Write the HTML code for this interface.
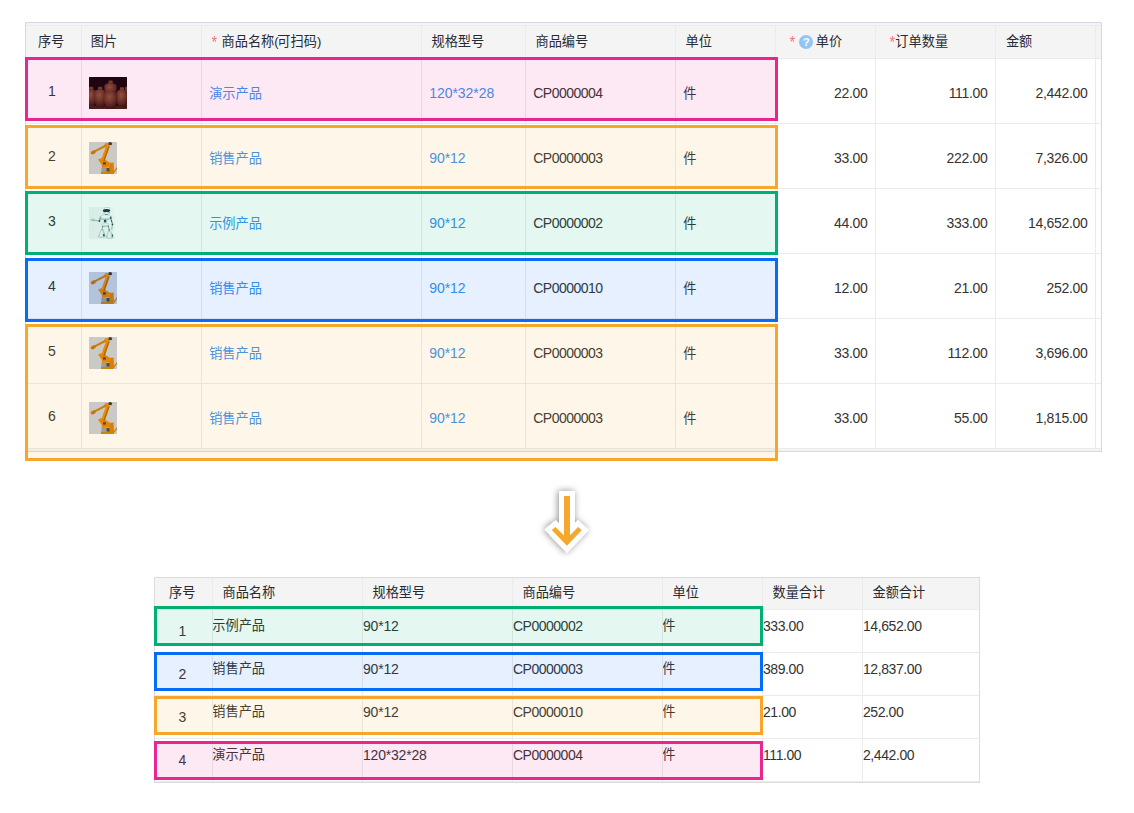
<!DOCTYPE html>
<html lang="zh-CN">
<head>
<meta charset="utf-8">
<title>明细汇总</title>
<style>
*{box-sizing:border-box}
html,body{margin:0;padding:0;background:#fff}
body{position:relative;width:1134px;height:813px;overflow:hidden;font-family:"Liberation Sans",sans-serif;font-size:14px;line-height:16px;color:#333}
.cj{display:inline-block;vertical-align:middle;font-family:"Liberation Sans","Noto Sans CJK SC",sans-serif;font-size:13.2px;line-height:13.2px;height:13.2px;letter-spacing:0;white-space:nowrap;overflow:visible;position:relative}
.grid{position:absolute;border:1px solid #d8d8d8;background:#fff;overflow:hidden}
.grid table{border-collapse:separate;border-spacing:0;table-layout:fixed;width:100%}
.grid th,.grid td{padding:0;border-right:1px solid #ebebeb;border-bottom:1px solid #ebebeb;font-weight:normal;text-align:left;white-space:nowrap;overflow:hidden;vertical-align:middle}
.grid th{background:#f4f4f4;color:#262a33}
.grid th:last-child,.grid td:last-child{border-right:0}
.h{display:flex;align-items:center;height:32px}
#t2 .h{height:31px}
.star{color:#f67272;font-size:17px;line-height:16px;height:16px;position:relative;top:1.2px;margin-left:-.9px;margin-right:-1px;transform:scaleX(.84)}
.par{font-size:13px;line-height:16px;letter-spacing:-1.3px;top:-.2px}
.lat{position:relative}

/* ---------- top table */
#t1{left:25px;top:22px;width:1077px;height:430px}
#t1 .cap{height:2px;background:#f1f4fa}
#t1 .foot{height:2px;background:#f4f4f4}
#t1 th{height:34px;border-top:1px solid #ebebeb;padding-left:9.5px}
#t1 th .cj{top:-.3px}
#t1 td{height:65px;padding-left:7.2px}
#t1 td .cj{top:.8px}
#t1 td.idx{text-align:center;padding:0 3px 0 0}
#t1 td.img{padding-left:7px;line-height:0}
#t1 td.img svg{display:block;position:relative;top:2px}
#t1 td.num{text-align:right;padding:0 7.6px 0 0;letter-spacing:-.33px}
#t1 td.code{letter-spacing:-.5px}
#t1 td.spec{letter-spacing:-.05px}
#t1 .lnk{color:#3791f0}
#t1 td .lat{top:1.5px}
#t1 td.idx .lat{top:-.4px}
.q{display:block;flex:none;width:14px;height:14px;border-radius:50%;background:#93c4f4;color:#fff;font-weight:bold;font-size:11.5px;line-height:15.4px;text-align:center;position:relative;margin:0 2.5px 0 4.4px;top:0px}

/* ---------- bottom table */
#t2{left:154px;top:577px;width:826px;height:206px;border-color:#dcdcdc}
#t2 th{height:32px;padding-left:9.5px}
#t2 th .cj{top:-1px}
#t2 td{height:43px;vertical-align:top;padding-top:8px;letter-spacing:-.42px}
#t2 td.idx{text-align:center;vertical-align:middle;padding:0 2px 0 0;letter-spacing:0}
#t2 td.code{letter-spacing:-.5px}
#t2 td.spec{letter-spacing:-.2px}
#t2 td .cj{top:-1.6px;margin-left:-.7px}

/* ---------- highlight overlays */
.hl{position:absolute;border:3px solid;pointer-events:none}
.hl.pink{border-color:#e9268f;background:rgba(233,38,143,.1)}
.hl.orange{border-color:#f5a62b;background:rgba(245,166,43,.1)}
.hl.green{border-color:#00b073;background:rgba(0,176,115,.1)}
.hl.blue{border-color:#066cf6;background:rgba(6,108,246,.1)}
#arrow{position:absolute;left:527px;top:476px}
</style>
</head>
<body>

<svg width="0" height="0" style="position:absolute" aria-hidden="true"><defs>
<radialGradient id="jg" cx=".42" cy=".32" r=".8"><stop offset="0" stop-color="#8a5532"/><stop offset=".5" stop-color="#5a301d"/><stop offset="1" stop-color="#1c0905"/></radialGradient>
<filter id="b4" x="-10%" y="-10%" width="120%" height="120%"><feGaussianBlur stdDeviation=".45"/></filter>
<filter id="b3" x="-10%" y="-10%" width="120%" height="120%"><feGaussianBlur stdDeviation=".3"/></filter>
<filter id="sh" x="-60%" y="-40%" width="220%" height="180%"><feDropShadow dx="-1" dy="0" stdDeviation="3.5" flood-color="#000" flood-opacity=".45"/></filter>
<symbol id="arm" viewBox="0 0 28 32">
 <rect width="28" height="32" fill="#c6cdd8"/>
 <g filter="url(#b3)">
  <path d="M12 30.1 L24 30.1 L28 25 L28 26.9 L24.4 31.9 L12 31.9Z" fill="#c28408"/>
  <rect x="12.4" y="25.6" width="5" height="4.4" fill="#9b99a0"/>
  <rect x="17.4" y="26" width="3.6" height="3.7" fill="#4b4233"/>
  <path d="M19.5 21 L24.6 20.6 L25 30 L20.8 30 Z" fill="#d87a04"/>
  <path d="M9 17.5 L13.5 15.8 L21.5 21.2 L21 25.6 L13 25.8 L12.6 22.6 Z" fill="#e28204"/>
  <rect x="14" y="20.2" width="2.8" height="2.4" fill="#3d3a36"/>
  <path d="M17.3 3.2 L20.7 4.6 L15.5 19.3 L12.2 17.7 Z" fill="#e98a06"/>
  <path d="M19.4 4.1 L20.7 4.6 L15.5 19.3 L14.2 18.7Z" fill="#a86004"/>
  <circle cx="17.6" cy="3.3" r="2.3" fill="#e08a08"/>
  <ellipse cx="21.2" cy="1.7" rx="1.9" ry="1.6" fill="#3a2b2a"/>
  <path d="M16.2 2.8 L17 4.7 L5.2 10.8 L4.4 9 Z" fill="#c47a08"/>
  <ellipse cx="4.2" cy="10.4" rx="2.6" ry="1.8" transform="rotate(-22 4.2 10.4)" fill="#c96c06"/>
 </g>
</symbol>
</defs></svg>
<div class="grid" id="t1"><div class="cap"></div><table>
<colgroup><col style="width:56px"><col style="width:120px"><col style="width:220px"><col style="width:104px"><col style="width:150px"><col style="width:100px"><col style="width:100px"><col style="width:120px"><col style="width:100px"><col style="width:5px"></colgroup>
<thead><tr>
<th style="padding-left:11.9px"><div class="h"><span class="cj">序号</span></div></th>
<th style="padding-left:8.8px"><div class="h"><span class="cj">图片</span></div></th>
<th style="padding-left:10px"><div class="h"><span class="star">*</span><span style="display:inline-block;width:4.8px"></span><span class="cj">商品名称</span><span class="lat par">(</span><span class="cj">可扫码</span><span class="lat par">)</span></div></th>
<th><div class="h"><span class="cj">规格型号</span></div></th>
<th><div class="h"><span class="cj">商品编号</span></div></th>
<th><div class="h"><span class="cj">单位</span></div></th>
<th style="padding-left:14.1px"><div class="h"><span class="star">*</span><span class="q">?</span><span class="cj">单价</span></div></th>
<th style="padding-left:14.1px"><div class="h"><span class="star">*</span><span style="display:inline-block;width:.5px"></span><span class="cj">订单数量</span></div></th>
<th style="padding-left:9.9px"><div class="h"><span class="cj">金额</span></div></th>
<th></th></tr></thead><tbody>
<tr><td class="idx"><span class="lat">1</span></td><td class="img"><svg width="38" height="32" viewBox="0 0 38 32" role="img" aria-label="jars"><rect width="38" height="32" fill="#070203"/><g filter="url(#b4)"><rect y="28.8" width="38" height="3.2" fill="#3a1a0c"/><rect x="19.4" y="3.6" width="4.4" height="3" rx="1.1" fill="#6b3d25"/><path d="M20.0,6.2 C15.7,6.6 15.4,8.2 15.4,10.8 C15.4,14.6 17.1,17.7 17.8,19.0 L25.4,19.0 C26.1,17.7 27.8,14.6 27.8,10.8 C27.8,8.2 27.5,6.6 23.2,6.2Z" fill="url(#jg)"/><rect x="0.0" y="9.8" width="4.4" height="3" rx="1.1" fill="#6b3d25"/><path d="M0.6,12.4 C-2.8,12.8 -3.1,15.1 -3.1,18.4 C-3.1,23.4 -1.6,27.3 -1.1,29.0 L5.5,29.0 C6.0,27.3 7.5,23.4 7.5,18.4 C7.5,15.1 7.2,12.8 3.8,12.4Z" fill="url(#jg)"/><rect x="36.0" y="9.8" width="4.4" height="3" rx="1.1" fill="#6b3d25"/><path d="M36.6,12.4 C34.4,12.8 34.2,15.1 34.2,18.4 C34.2,23.4 35.3,27.3 35.7,29.0 L40.7,29.0 C41.1,27.3 42.2,23.4 42.2,18.4 C42.2,15.1 42.0,12.8 39.8,12.4Z" fill="url(#jg)"/><rect x="9.0" y="9.8" width="4.4" height="3" rx="1.1" fill="#6b3d25"/><path d="M9.6,12.4 C5.5,12.8 5.2,15.2 5.2,18.7 C5.2,24.0 6.9,28.2 7.5,30.0 L14.9,30.0 C15.5,28.2 17.2,24.0 17.2,18.7 C17.2,15.2 16.9,12.8 12.8,12.4Z" fill="url(#jg)"/><rect x="30.8" y="10.2" width="4.4" height="3" rx="1.1" fill="#6b3d25"/><path d="M31.4,12.8 C27.5,13.2 27.2,15.6 27.2,19.0 C27.2,24.2 28.8,28.3 29.4,30.0 L36.6,30.0 C37.2,28.3 38.8,24.2 38.8,19.0 C38.8,15.6 38.5,13.2 34.6,12.8Z" fill="url(#jg)"/><rect x="19.4" y="11.8" width="4.4" height="3" rx="1.1" fill="#6b3d25"/><path d="M20.0,14.4 C15.1,14.8 14.8,17.1 14.8,20.4 C14.8,25.5 16.7,29.5 17.4,31.2 L25.8,31.2 C26.5,29.5 28.4,25.5 28.4,20.4 C28.4,17.1 28.1,14.8 23.2,14.4Z" fill="url(#jg)"/></g></svg></td><td class="lnk"><span class="cj">演示产品</span></td><td class="spec lnk"><span class="lat">120*32*28</span></td><td class="code"><span class="lat">CP0000004</span></td><td><span class="cj">件</span></td><td class="num"><span class="lat">22.00</span></td><td class="num"><span class="lat">111.00</span></td><td class="num"><span class="lat">2,442.00</span></td><td></td></tr>
<tr><td class="idx"><span class="lat">2</span></td><td class="img"><svg width="28" height="32" role="img" aria-label="robot arm"><use href="#arm" width="28" height="32"/></svg></td><td class="lnk"><span class="cj">销售产品</span></td><td class="spec lnk"><span class="lat">90*12</span></td><td class="code"><span class="lat">CP0000003</span></td><td><span class="cj">件</span></td><td class="num"><span class="lat">33.00</span></td><td class="num"><span class="lat">222.00</span></td><td class="num"><span class="lat">7,326.00</span></td><td></td></tr>
<tr><td class="idx"><span class="lat">3</span></td><td class="img"><svg width="26" height="32" viewBox="0 0 26 32" role="img" aria-label="robot"><defs>
<linearGradient id="rbg" x1="0" x2="1" y1="0" y2="0"><stop offset="0" stop-color="#f1f4f4"/><stop offset=".55" stop-color="#f3f5f5"/><stop offset="1" stop-color="#fbfcfc"/></linearGradient>
<linearGradient id="wg" x1="0" x2="0" y1="0" y2="1"><stop offset="0" stop-color="#ffffff"/><stop offset=".55" stop-color="#f4f8f9"/><stop offset="1" stop-color="#96aab1"/></linearGradient>
<linearGradient id="wg2" x1="0" x2="1" y1="0" y2="0"><stop offset="0" stop-color="#c3d0d4"/><stop offset=".35" stop-color="#ffffff"/><stop offset=".65" stop-color="#e4ebed"/><stop offset="1" stop-color="#8fa5ad"/></linearGradient>
</defs><rect width="26" height="32" fill="url(#rbg)"/><g filter="url(#b3)">
<ellipse cx="18" cy="1.7" rx="2.5" ry="1.5" fill="#fbfdfd" stroke="#9fb3b9" stroke-width=".5"/>
<ellipse cx="17.5" cy="3.6" rx="3.7" ry="1.7" fill="#0f2c29"/>
<path d="M14.2 4.6 Q17.4 6.4 21.2 4.4 L20.6 6.2 Q17.6 7.6 14.8 6Z" fill="#7fb0ba"/>
<ellipse cx="17.5" cy="6.4" rx="2.3" ry="1.3" fill="url(#wg)" stroke="#a9bbc0" stroke-width=".4"/>
<rect x="16" y="7.2" width="2.4" height="1" fill="#1c3f3d"/>
<path d="M11 10.2 Q11.4 7.8 16.6 7.8 Q21.8 7.8 22 10 Q22 12.6 16.6 13 Q11.4 12.8 11 10.2Z" fill="url(#wg)" stroke="#a3b6bc" stroke-width=".5"/>
<ellipse cx="21.7" cy="10.9" rx=".95" ry="1.3" fill="#2a5a58"/>
<rect x="14.9" y="12.8" width="2.5" height="2.7" rx=".9" fill="#1f4e4b"/>
<path d="M12.8 17.4 Q13 16 16.3 16 Q19.6 16 19.8 17.4 Q19.4 19.4 16.3 19.5 Q13.2 19.4 12.8 17.4Z" fill="url(#wg)" stroke="#a3b6bc" stroke-width=".5"/>
<path d="M11.7 10.2 L10.3 14" stroke="#8ea6ad" stroke-width="1.5" stroke-linecap="round"/>
<circle cx="10.3" cy="14" r="1" fill="#24524f"/>
<path d="M10 14 L6 13.3" stroke="#a3b6bb" stroke-width="1.1"/>
<path d="M.9 11.9 Q2 14.9 6.4 13.9 L6.2 12.6 L5 12.8 L4.3 10.6 L3.5 12.4Z" fill="#aebfc4"/>
<path d="M22.2 12 L23.4 17.3 L22.7 23" stroke="#9fb4ba" stroke-width="1.1" fill="none"/>
<circle cx="23.5" cy="17.4" r=".85" fill="#1d4644"/><path d="M22.3 12.8 L22.9 15.4" stroke="#2f615f" stroke-width="1"/>
<path d="M13.7 19 L13.2 23.2" stroke="#4d7a79" stroke-width="1.1"/><path d="M13.5 20.6 L13.3 22" stroke="#c8d5d8" stroke-width="1.4"/>
<path d="M19.1 18.6 L20.4 24" stroke="#4d7a79" stroke-width="1.1"/><path d="M19.6 20.6 L19.9 22" stroke="#c8d5d8" stroke-width="1.4"/>
<path d="M12.2 23 L14.2 23 L16.4 29.6 Q13 31 9.4 29.8 Z" fill="url(#wg2)" stroke="#9db0b6" stroke-width=".55"/><ellipse cx="14.8" cy="28.1" rx=".9" ry="1.2" fill="#2a5755"/>
<path d="M19.4 24 L21.4 24 L24.2 30.6 Q21 32.2 17.4 30.8 Z" fill="url(#wg2)" stroke="#9db0b6" stroke-width=".55"/><ellipse cx="23.5" cy="28.4" rx=".55" ry="1.2" fill="#2a5755"/>
</g></svg></td><td class="lnk"><span class="cj">示例产品</span></td><td class="spec lnk"><span class="lat">90*12</span></td><td class="code"><span class="lat">CP0000002</span></td><td><span class="cj">件</span></td><td class="num"><span class="lat">44.00</span></td><td class="num"><span class="lat">333.00</span></td><td class="num"><span class="lat">14,652.00</span></td><td></td></tr>
<tr><td class="idx"><span class="lat">4</span></td><td class="img"><svg width="28" height="32" role="img" aria-label="robot arm"><use href="#arm" width="28" height="32"/></svg></td><td class="lnk"><span class="cj">销售产品</span></td><td class="spec lnk"><span class="lat">90*12</span></td><td class="code"><span class="lat">CP0000010</span></td><td><span class="cj">件</span></td><td class="num"><span class="lat">12.00</span></td><td class="num"><span class="lat">21.00</span></td><td class="num"><span class="lat">252.00</span></td><td></td></tr>
<tr><td class="idx"><span class="lat">5</span></td><td class="img"><svg width="28" height="32" role="img" aria-label="robot arm"><use href="#arm" width="28" height="32"/></svg></td><td class="lnk"><span class="cj">销售产品</span></td><td class="spec lnk"><span class="lat">90*12</span></td><td class="code"><span class="lat">CP0000003</span></td><td><span class="cj">件</span></td><td class="num"><span class="lat">33.00</span></td><td class="num"><span class="lat">112.00</span></td><td class="num"><span class="lat">3,696.00</span></td><td></td></tr>
<tr><td class="idx"><span class="lat">6</span></td><td class="img"><svg width="28" height="32" role="img" aria-label="robot arm"><use href="#arm" width="28" height="32"/></svg></td><td class="lnk"><span class="cj">销售产品</span></td><td class="spec lnk"><span class="lat">90*12</span></td><td class="code"><span class="lat">CP0000003</span></td><td><span class="cj">件</span></td><td class="num"><span class="lat">33.00</span></td><td class="num"><span class="lat">55.00</span></td><td class="num"><span class="lat">1,815.00</span></td><td></td></tr>
</tbody></table><div class="foot"></div></div>
<svg id="arrow" width="80" height="92" viewBox="527 476 80 92" aria-hidden="true"><path filter="url(#sh)" d="M564,496 L570,496 L570,535.2 L578.1,527 L581.7,530.2 L566.9,545.7 L551.8,530 L555.4,527 L564,535.4 Z" fill="#f5a82d" stroke="#fff" stroke-width="10" stroke-linejoin="miter" stroke-miterlimit="10" paint-order="stroke"/></svg>
<div class="grid" id="t2"><table>
<colgroup><col style="width:58px"><col style="width:150px"><col style="width:150px"><col style="width:150px"><col style="width:100px"><col style="width:100px"><col style="width:116px"></colgroup>
<thead><tr>
<th style="padding-left:14px"><div class="h"><span class="cj">序号</span></div></th>
<th><div class="h"><span class="cj">商品名称</span></div></th>
<th><div class="h"><span class="cj">规格型号</span></div></th>
<th><div class="h"><span class="cj">商品编号</span></div></th>
<th><div class="h"><span class="cj">单位</span></div></th>
<th><div class="h"><span class="cj">数量合计</span></div></th>
<th><div class="h"><span class="cj">金额合计</span></div></th>
</tr></thead><tbody>
<tr><td class="idx"><span class="lat">1</span></td><td><span class="cj">示例产品</span></td><td class="spec"><span class="lat">90*12</span></td><td class="code"><span class="lat">CP0000002</span></td><td><span class="cj">件</span></td><td><span class="lat">333.00</span></td><td><span class="lat">14,652.00</span></td></tr>
<tr><td class="idx"><span class="lat">2</span></td><td><span class="cj">销售产品</span></td><td class="spec"><span class="lat">90*12</span></td><td class="code"><span class="lat">CP0000003</span></td><td><span class="cj">件</span></td><td><span class="lat">389.00</span></td><td><span class="lat">12,837.00</span></td></tr>
<tr><td class="idx"><span class="lat">3</span></td><td><span class="cj">销售产品</span></td><td class="spec"><span class="lat">90*12</span></td><td class="code"><span class="lat">CP0000010</span></td><td><span class="cj">件</span></td><td><span class="lat">21.00</span></td><td><span class="lat">252.00</span></td></tr>
<tr><td class="idx"><span class="lat">4</span></td><td><span class="cj">演示产品</span></td><td class="spec"><span class="lat">120*32*28</span></td><td class="code"><span class="lat">CP0000004</span></td><td><span class="cj">件</span></td><td><span class="lat">111.00</span></td><td><span class="lat">2,442.00</span></td></tr>
</tbody></table></div>
<div class="hl pink" style="left:25px;top:57px;width:753px;height:64px"></div>
<div class="hl orange" style="left:25px;top:125px;width:753px;height:64px"></div>
<div class="hl green" style="left:25px;top:191px;width:753px;height:64px"></div>
<div class="hl blue" style="left:25px;top:258px;width:753px;height:64px"></div>
<div class="hl orange" style="left:25px;top:324px;width:753px;height:137px"></div>
<div class="hl green" style="left:154px;top:606px;width:609px;height:40px"></div>
<div class="hl blue" style="left:154px;top:652px;width:609px;height:39px"></div>
<div class="hl orange" style="left:154px;top:696px;width:609px;height:39px"></div>
<div class="hl pink" style="left:154px;top:741px;width:609px;height:39px"></div>
</body>
</html>
